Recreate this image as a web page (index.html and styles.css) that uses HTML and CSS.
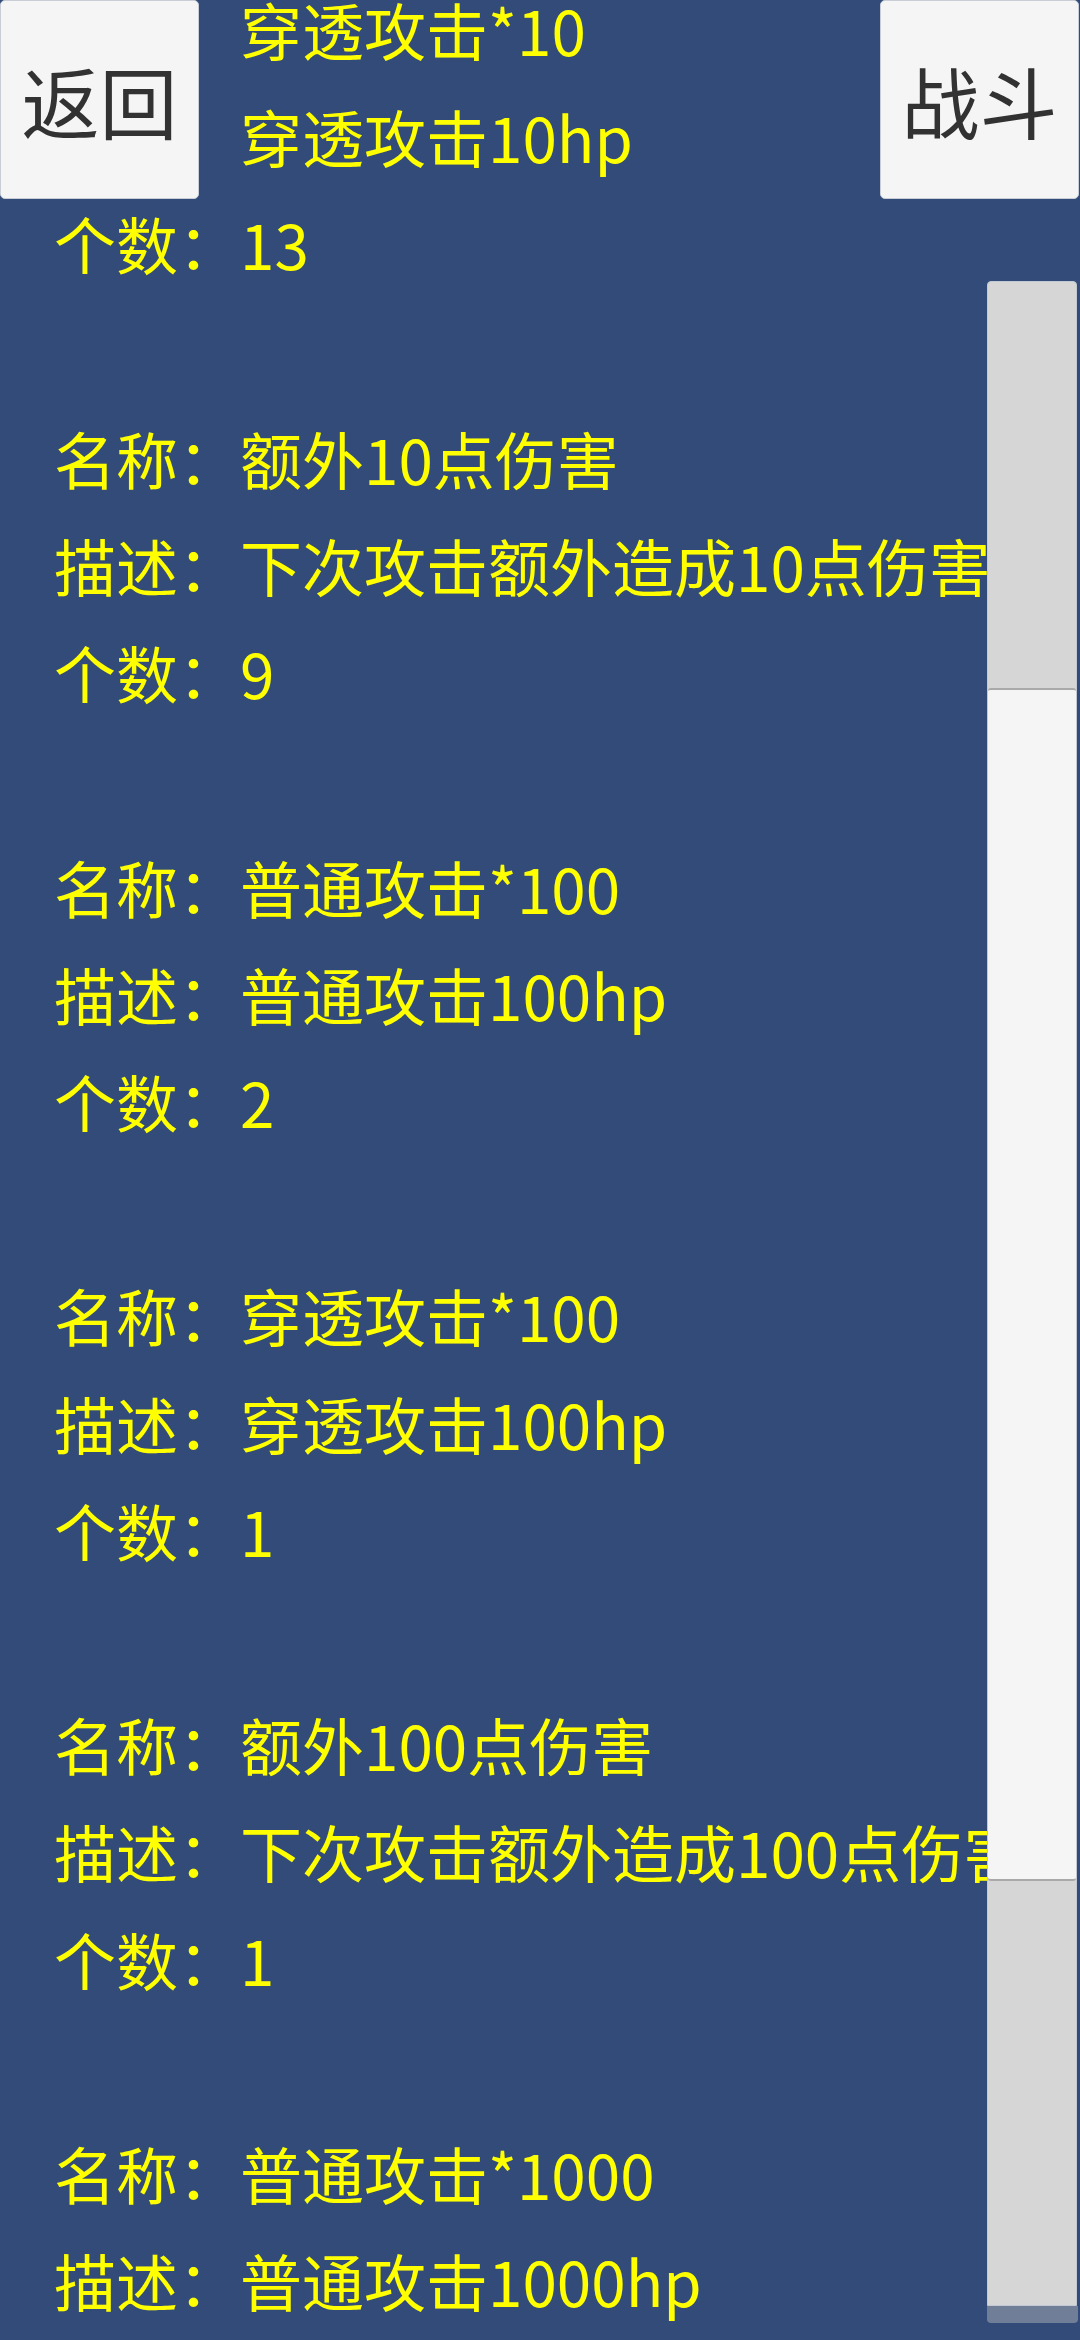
FILE: index.html
```html
<!DOCTYPE html>
<html lang="zh-CN">
<head>
  <meta charset="UTF-8">
  <meta name="viewport" content="width=device-width, initial-scale=1.0">
  <title>背包</title>
  <link rel="stylesheet" href="styles.css">
</head>
<body>
  <div class="screen">
    <div class="list">
      <!-- first item is scrolled under the buttons, its labels are covered -->
      <div class="item">
        <div class="row"><span class="covered">名称：</span>穿透攻击*10</div>
        <div class="row"><span class="covered">描述：</span>穿透攻击10hp</div>
        <div class="row">个数：13</div>
      </div>
      <div class="item">
        <div class="row">名称：额外10点伤害</div>
        <div class="row">描述：下次攻击额外造成10点伤害</div>
        <div class="row">个数：9</div>
      </div>
      <div class="item">
        <div class="row">名称：普通攻击*100</div>
        <div class="row">描述：普通攻击100hp</div>
        <div class="row">个数：2</div>
      </div>
      <div class="item">
        <div class="row">名称：穿透攻击*100</div>
        <div class="row">描述：穿透攻击100hp</div>
        <div class="row">个数：1</div>
      </div>
      <div class="item">
        <div class="row">名称：额外100点伤害</div>
        <div class="row">描述：下次攻击额外造成100点伤害</div>
        <div class="row">个数：1</div>
      </div>
      <div class="item">
        <div class="row">名称：普通攻击*1000</div>
        <div class="row">描述：普通攻击1000hp</div>
        <div class="row">个数：1</div>
      </div>
    </div>

    <button type="button" class="btn btn-back">返回</button>
    <button type="button" class="btn btn-fight">战斗</button>

    <div class="scrollbar">
      <div class="thumb"></div>
    </div>
    <div class="scroll-foot"></div>
  </div>
</body>
</html>
```

FILE: styles.css
```css
/* Page */
html, body {
margin: 0;
padding: 0;
}

body {
background-color: #324b78;
font-family: "Noto Sans CJK SC", sans-serif;
}

.screen {
position: relative;
width: 1080px;
height: 2340px;
overflow: hidden;
}

/* Item list (scrolled a little, first row is cut at the top) */
.list {
margin-top: -24px;
padding-left: 54px;
color: #ffff00;
font-size: 62px;
line-height: 107.2px;
white-space: nowrap;
}

.item {
margin-bottom: 107.2px;
}

/* labels that sit under the top buttons */
.covered {
visibility: hidden;
}

/* Top buttons */
.btn {
position: absolute;
top: 0;
width: 199px;
height: 199px;
padding: 0;
background-color: #f5f5f5;
border: 1px solid #c9ced6;
border-radius: 5px;
color: #323232;
font-family: "Noto Sans CJK SC", sans-serif;
font-size: 78px;
line-height: 1;
}

.btn-back {
left: 0;
}

.btn-fight {
right: 1px;
}

/* Vertical scrollbar */
.scrollbar {
position: absolute;
left: 987px;
top: 281px;
width: 90px;
height: 2025px;
box-sizing: border-box;
background-color: #d6d6d6;
border: 1px solid #c3c9d3;
border-radius: 4px 4px 0 0;
}

.thumb {
position: absolute;
left: 0;
right: 0;
top: 406px;
height: 1193px;
box-sizing: border-box;
background-color: #f5f5f5;
border-top: 2px solid #a9a9a9;
border-bottom: 2px solid #a9a9a9;
border-radius: 3px;
}

.scroll-foot {
position: absolute;
left: 987px;
top: 2306px;
width: 91px;
height: 17px;
background-color: #717e97;
border-radius: 0 0 4px 4px;
}
```
